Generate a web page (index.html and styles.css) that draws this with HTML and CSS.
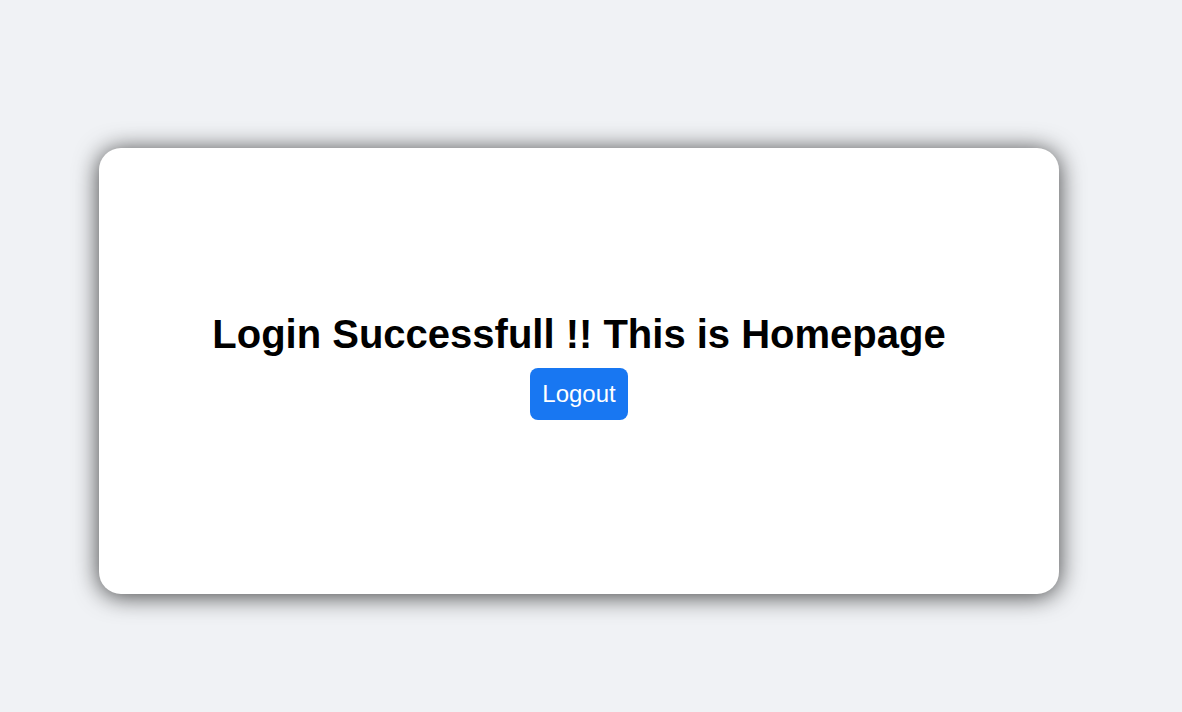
FILE: index.html
```html
<!DOCTYPE html>
<html>
<head>
<meta charset="utf-8">
<link rel="stylesheet" href="styles.css">
</head>
<body>
<div class="page">
  <div class="card">
    <h1 class="title">Login Successfull !! This is Homepage</h1>
    <button class="logout">Logout</button>
  </div>
</div>
</body>
</html>
```
FILE: styles.css
```css
html, body {
  margin: 0;
  padding: 0;
  height: 100%;
  background: #f0f2f5;
  font-family: "Liberation Sans", Arial, sans-serif;
}
.page {
  height: 712px;
  display: flex;
  align-items: flex-start;
  padding: 148px 0 0 99px;
  box-sizing: border-box;
}
.card {
  width: 960px;
  height: 446px;
  box-sizing: border-box;
  padding-top: 164px;
  background: #fff;
  border-radius: 22px;
  box-shadow: 0 2px 24px rgba(0, 0, 0, 0.75);
  display: flex;
  flex-direction: column;
  align-items: center;
}
.title {
  margin: 0 0 11px;
  font-size: 40px;
  font-weight: bold;
  color: #000;
}
.logout {
  background: #1877f2;
  color: #fff;
  border: none;
  border-radius: 8px;
  font-family: "Liberation Sans", Arial, sans-serif;
  font-size: 24px;
  padding: 12px 12px;
  cursor: pointer;
}
```
